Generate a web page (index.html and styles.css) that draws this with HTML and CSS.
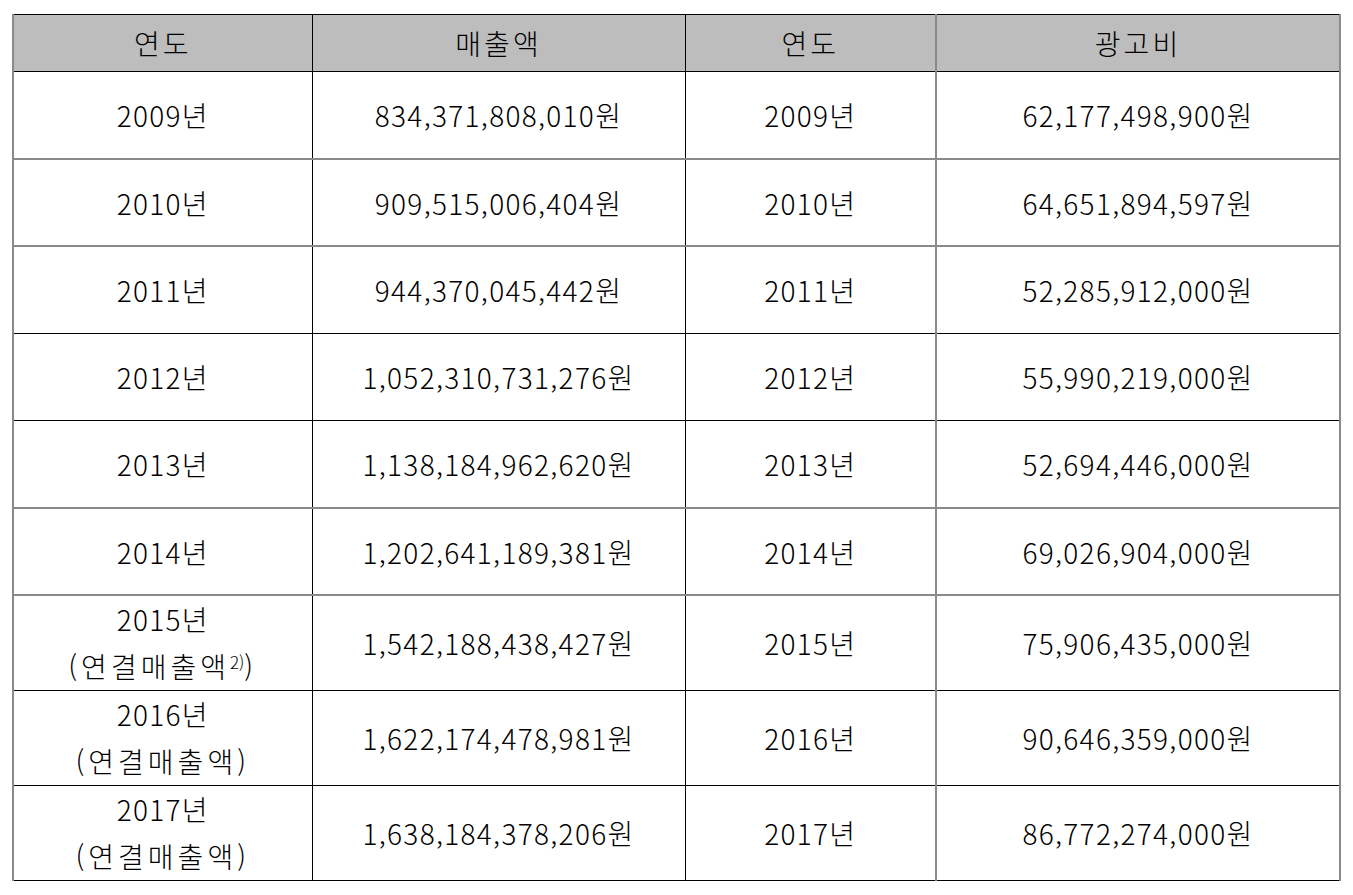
FILE: index.html
```html
<!DOCTYPE html>
<html lang="ko">
<head>
<meta charset="utf-8">
<link rel="stylesheet" href="styles.css">
</head>
<body>
<table class="sheet">
  <colgroup>
    <col class="w1"><col class="w2"><col class="w3"><col class="w4">
  </colgroup>
  <thead>
    <tr class="head">
      <th>연도</th><th>매출액</th><th>연도</th><th class="c4">광고비</th>
    </tr>
  </thead>
  <tbody>
    <tr class="r g"><td>2009년</td><td>834,371,808,010원</td><td>2009년</td><td class="c4">62,177,498,900원</td></tr>
    <tr class="r g short"><td>2010년</td><td>909,515,006,404원</td><td>2010년</td><td class="c4">64,651,894,597원</td></tr>
    <tr class="r k"><td>2011년</td><td>944,370,045,442원</td><td>2011년</td><td class="c4">52,285,912,000원</td></tr>
    <tr class="r k"><td>2012년</td><td>1,052,310,731,276원</td><td>2012년</td><td class="c4">55,990,219,000원</td></tr>
    <tr class="r g"><td>2013년</td><td>1,138,184,962,620원</td><td>2013년</td><td class="c4">52,694,446,000원</td></tr>
    <tr class="r g short"><td>2014년</td><td>1,202,641,189,381원</td><td>2014년</td><td class="c4">69,026,904,000원</td></tr>
    <tr class="r2 k"><td><div class="ln">2015년</div><div class="ln">(연결매출액<sup>2)</sup>)</div></td><td>1,542,188,438,427원</td><td>2015년</td><td class="c4">75,906,435,000원</td></tr>
    <tr class="r2 k"><td><div class="ln">2016년</div><div class="ln">(연결매출액)</div></td><td>1,622,174,478,981원</td><td>2016년</td><td class="c4">90,646,359,000원</td></tr>
    <tr class="r2 k"><td><div class="ln">2017년</div><div class="ln">(연결매출액)</div></td><td>1,638,184,378,206원</td><td>2017년</td><td class="c4">86,772,274,000원</td></tr>
  </tbody>
</table>
</body>
</html>
```
FILE: styles.css
```css
html, body {
  margin: 0;
  padding: 0;
  background: #ffffff;
}
body {
  padding: 14px 0 0 12px;
  font-family: "Noto Sans CJK KR", "Noto Sans", sans-serif;
  color: #000;
}
.sheet {
  border-collapse: collapse;
  table-layout: fixed;
  width: 1327px;
  border-left: 2px solid #8a8a8a;
  border-right: 2px solid #8a8a8a;
  border-top: 1px solid #000;
}
.w1 { width: 299px; }
.w2 { width: 373px; }
.w3 { width: 251px; }
.w4 { width: 404px; }
th, td {
  padding: 0;
  text-align: center;
  vertical-align: middle;
  font-size: 28px;
  font-weight: 300;
  letter-spacing: 1.3px;
  border-left: 1px solid #000;
  line-height: 1;
}
th:first-child, td:first-child { border-left: 2px solid #8a8a8a; }
.c4 { border-left: 2px solid #8a8a8a; }
.head th {
  background: #bdbdbd;
  height: 56px;
  letter-spacing: 3px;
  border-bottom: 1px solid #000;
}
.r td { height: 86px; }
.r.short td { height: 85px; }
.r2 td { height: 94px; }
.g td { border-bottom: 2px solid #8a8a8a; }
.k td { border-bottom: 1px solid #000; }
.ln { line-height: 47px; }
.ln + .ln { letter-spacing: 4px; }
sup {
  font-size: 17px;
  letter-spacing: 0;
  vertical-align: 9px;
  line-height: 0;
}
```
